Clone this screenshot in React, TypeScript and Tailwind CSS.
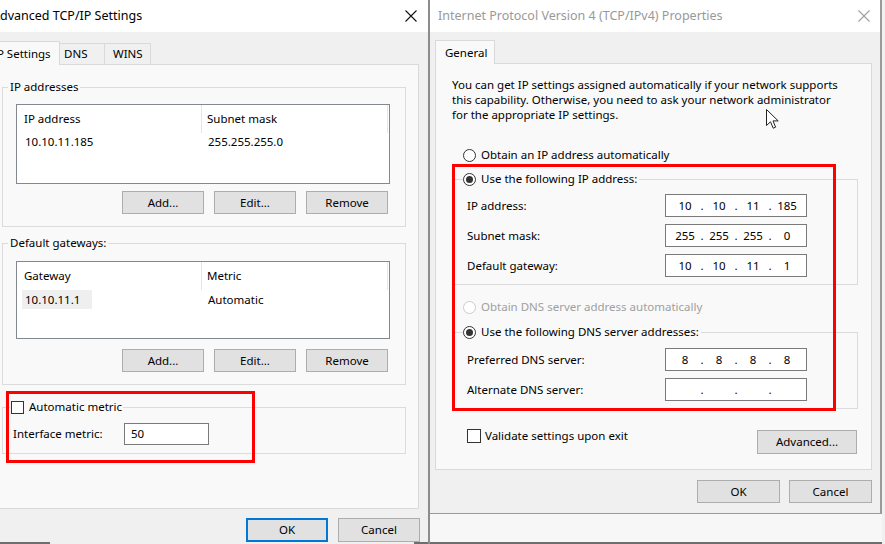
import React from "react";

function CloseX({ color }: { color: string }) {
  return (
    <svg width="12" height="12" viewBox="0 0 12 12">
      <path d="M0.5 0.5 L11.5 11.5 M11.5 0.5 L0.5 11.5" stroke={color} strokeWidth="1.1" fill="none" />
    </svg>
  );
}

function Radio({ checked = false, disabled = false }: { checked?: boolean; disabled?: boolean }) {
  return (
    <span
      className={
        disabled
          ? "flex h-[13px] w-[13px] shrink-0 items-center justify-center rounded-full border border-[#cccccc] bg-white"
          : "flex h-[13px] w-[13px] shrink-0 items-center justify-center rounded-full border border-[#333333] bg-white"
      }
    >
      {checked && <span className="h-[7px] w-[7px] rounded-full bg-[#333333]" />}
    </span>
  );
}

function Checkbox() {
  return <span className="block h-[13px] w-[13px] shrink-0 border border-[#333333] bg-white" />;
}

function Btn({ children, className }: { children: React.ReactNode; className: string }) {
  return (
    <div className={"flex items-center justify-center bg-[#e1e1e1] " + className}>{children}</div>
  );
}

function IpField({ parts }: { parts: string[] }) {
  return (
    <div className="flex h-[23px] w-[142px] items-center border border-[#7a7a7a] bg-white pl-[4px]">
      {parts.map((p, i) => (
        <React.Fragment key={i}>
          {i > 0 && <span className="w-[4px] text-center">.</span>}
          <span className="w-[30px] text-center">{p}</span>
        </React.Fragment>
      ))}
    </div>
  );
}

function IpRow({ label, parts }: { label: string; parts: string[] }) {
  return (
    <div className="flex h-[23px] items-center">
      <span className="w-[210px] pl-[12px]">{label}</span>
      <IpField parts={parts} />
    </div>
  );
}

export default function App() {
  return (
    <div className="relative flex h-[544px] w-[885px] overflow-hidden bg-[#f0f0f0] font-['Noto_Sans',sans-serif] text-[11.5px] leading-[16px] text-black">
      {/* Left dialog */}
      <div className="flex h-[544px] w-[430px] shrink-0 flex-col overflow-hidden border-r-2 border-[#8c8c8c]">
        <div className="flex h-[32px] shrink-0 items-center justify-between bg-white pr-[11px]">
          <span className="-ml-[8px] whitespace-nowrap text-[12.5px]">Advanced TCP/IP Settings</span>
          <CloseX color="#111111" />
        </div>
        <div className="flex flex-1 flex-col bg-[#f0f0f0] pt-[9px]">
          <div className="flex h-[23px] items-end">
            <div className="relative z-10 -mb-[1px] -ml-[16px] flex h-[24px] w-[76px] shrink-0 items-center whitespace-nowrap border-x border-t border-[#d9d9d9] bg-[#f9f9f9] pl-[8px]">
              IP Settings
            </div>
            <div className="flex h-[21px] w-[45px] shrink-0 items-center border-r border-t border-[#d9d9d9] pl-[4px]">DNS</div>
            <div className="flex h-[21px] w-[46px] shrink-0 items-center border-r border-t border-[#d9d9d9] pl-[8px]">WINS</div>
          </div>
          <div className="-ml-[1px] flex h-[445px] w-[420px] flex-col border border-[#d9d9d9] bg-[#f9f9f9]">
            {/* IP addresses */}
            <fieldset className="ml-[2px] mt-[14px] w-[404px] border border-[#dcdcdc]">
              <legend className="ml-[5px] px-[2px] leading-[16px]">IP addresses</legend>
              <div className="ml-[13px] mt-[9px] h-[80px] w-[374px] border border-[#828790] bg-white">
                <div className="flex h-[28px]">
                  <div className="flex w-[185px] items-center border-r border-[#e5e5e5] pl-[7px]">IP address</div>
                  <div className="flex w-[186px] items-center border-r border-[#e5e5e5] pl-[5px]">Subnet mask</div>
                </div>
                <div className="flex h-[18px] items-center">
                  <div className="w-[185px] pl-[8px]">10.10.11.185</div>
                  <div className="pl-[6px]">255.255.255.0</div>
                </div>
              </div>
              <div className="mt-[7px] flex justify-end gap-[10px] pb-[12px] pr-[17px]">
                <Btn className="h-[23px] w-[82px] border border-[#adadad]">Add...</Btn>
                <Btn className="h-[23px] w-[82px] border border-[#adadad]">Edit...</Btn>
                <Btn className="h-[23px] w-[82px] border border-[#adadad]">Remove</Btn>
              </div>
            </fieldset>

            {/* Default gateways */}
            <fieldset className="ml-[2px] mt-[8px] w-[404px] border border-[#dcdcdc]">
              <legend className="ml-[5px] px-[2px] leading-[16px]">Default gateways:</legend>
              <div className="ml-[13px] mt-[10px] h-[78px] w-[374px] border border-[#828790] bg-white">
                <div className="flex h-[28px]">
                  <div className="flex w-[185px] items-center border-r border-[#e5e5e5] pl-[7px]">Gateway</div>
                  <div className="flex w-[186px] items-center border-r border-[#e5e5e5] pl-[5px]">Metric</div>
                </div>
                <div className="flex h-[19px] items-center">
                  <div className="w-[185px] pl-[5px]">
                    <span className="flex h-[19px] w-[70px] items-center bg-[#efefef] pl-[3px]">10.10.11.1</span>
                  </div>
                  <div className="pl-[6px]">Automatic</div>
                </div>
              </div>
              <div className="mt-[10px] flex justify-end gap-[10px] pb-[12px] pr-[17px]">
                <Btn className="h-[23px] w-[82px] border border-[#adadad]">Add...</Btn>
                <Btn className="h-[23px] w-[82px] border border-[#adadad]">Edit...</Btn>
                <Btn className="h-[23px] w-[82px] border border-[#adadad]">Remove</Btn>
              </div>
            </fieldset>

            {/* Metric */}
            <fieldset className="ml-[2px] mt-[14px] w-[404px] border border-[#dcdcdc]">
              <legend className="ml-[7px] flex items-center px-[1px] leading-[16px]">
                <Checkbox />
                <span className="ml-[5px]">Automatic metric</span>
              </legend>
              <div className="mt-[8px] flex items-center pb-[8px] pl-[10px]">
                <span className="w-[111px]">Interface metric:</span>
                <div className="flex h-[22px] w-[85px] items-center border border-[#7a7a7a] bg-white pl-[6px]">50</div>
              </div>
            </fieldset>
          </div>
          <div className="ml-[246px] mt-[9px] flex gap-[10px]">
            <Btn className="h-[24px] w-[82px] border-2 border-[#0078d7]">OK</Btn>
            <Btn className="h-[24px] w-[82px] border border-[#adadad]">Cancel</Btn>
          </div>
          <div className="mt-auto flex h-[2px]">
            <div className="w-[50px] bg-[#6e6e6e]" />
            <div className="flex-1" />
            <div className="w-[14px] bg-[#6e6e6e]" />
          </div>
        </div>
      </div>

      {/* Right dialog */}
      <div className="flex h-[544px] w-[452px] shrink-0 flex-col">
        <div className="flex h-[514px] flex-col border-b border-r-2 border-[#9a9a9a]">
          <div className="flex h-[32px] shrink-0 items-center justify-between bg-white pl-[8px] pr-[10px] text-[#999999]">
            <span className="whitespace-nowrap text-[12.5px]">Internet Protocol Version 4 (TCP/IPv4) Properties</span>
            <CloseX color="#a0a0a0" />
          </div>
          <div className="flex flex-1 flex-col bg-[#f0f0f0] pt-[8px]">
            <div className="flex h-[23px] items-end pl-[5px]">
              <div className="relative z-10 -mb-[1px] flex h-[24px] w-[60px] items-center border-x border-t border-[#d9d9d9] bg-[#f9f9f9] pl-[9px]">
                General
              </div>
            </div>
            <div className="ml-[5px] flex h-[407px] w-[437px] flex-col border border-[#d9d9d9] bg-[#f9f9f9]">
              <p className="mt-[13px] whitespace-nowrap pl-[16px] leading-[15px]">
                You can get IP settings assigned automatically if your network supports
                <br />
                this capability. Otherwise, you need to ask your network administrator
                <br />
                for the appropriate IP settings.
              </p>
              <div className="mt-[25px] flex h-[16px] items-center pl-[27px]">
                <Radio />
                <span className="ml-[5px]">Obtain an IP address automatically</span>
              </div>
              <fieldset className="ml-[18px] mt-[8px] w-[404px] border border-[#dcdcdc]">
                <legend className="ml-[8px] flex items-center pr-[2px] leading-[16px]">
                  <Radio checked />
                  <span className="ml-[5px]">Use the following IP address:</span>
                </legend>
                <div className="mt-[7px] flex flex-col gap-[7px] pb-[7px]">
                  <IpRow label="IP address:" parts={["10", "10", "11", "185"]} />
                  <IpRow label="Subnet mask:" parts={["255", "255", "255", "0"]} />
                  <IpRow label="Default gateway:" parts={["10", "10", "11", "1"]} />
                </div>
              </fieldset>
              <div className="mt-[14px] flex h-[16px] items-center pl-[27px] text-[#a0a0a0]">
                <Radio disabled />
                <span className="ml-[5px]">Obtain DNS server address automatically</span>
              </div>
              <fieldset className="ml-[18px] mt-[9px] w-[404px] border border-[#dcdcdc]">
                <legend className="ml-[8px] flex items-center pr-[2px] leading-[16px]">
                  <Radio checked />
                  <span className="ml-[5px]">Use the following DNS server addresses:</span>
                </legend>
                <div className="mt-[8px] flex flex-col gap-[7px] pb-[7px]">
                  <IpRow label="Preferred DNS server:" parts={["8", "8", "8", "8"]} />
                  <IpRow label="Alternate DNS server:" parts={["", "", "", ""]} />
                </div>
              </fieldset>
              <div className="mt-[20px] flex items-start justify-between pl-[31px] pr-[14px]">
                <div className="flex h-[14px] items-center">
                  <span className="block h-[14px] w-[14px] border border-[#333333] bg-white" />
                  <span className="ml-[4px]">Validate settings upon exit</span>
                </div>
                <Btn className="mt-[1px] h-[24px] w-[100px] border border-[#adadad]">Advanced...</Btn>
              </div>
            </div>
            <div className="mt-[10px] flex justify-end gap-[9px] pr-[8px]">
              <Btn className="h-[23px] w-[83px] border border-[#adadad]">OK</Btn>
              <Btn className="h-[23px] w-[83px] border border-[#adadad]">Cancel</Btn>
            </div>
          </div>
        </div>
        <div className="flex-1 bg-[#f7f7f7]" />
        <div className="h-[2px] bg-[#6e6e6e]" />
      </div>

      {/* Highlight boxes */}
      <div className="pointer-events-none absolute left-[6px] top-[391px] h-[72px] w-[249px] border-[3px] border-[#ff0000]" />
      <div className="pointer-events-none absolute left-[452px] top-[164px] h-[247px] w-[384px] border-[3px] border-[#ff0000]" />

      {/* Mouse cursor */}
      <svg className="pointer-events-none absolute left-[766px] top-[109px]" width="14" height="21" viewBox="0 0 14 21">
        <path d="M0.5 0.5 L0.5 16.5 L4.5 12.8 L7.2 19.2 L9.6 18.2 L7 11.9 L12.2 11.9 Z" fill="white" stroke="#222222" strokeWidth="1" strokeLinejoin="miter" />
      </svg>
    </div>
  );
}
